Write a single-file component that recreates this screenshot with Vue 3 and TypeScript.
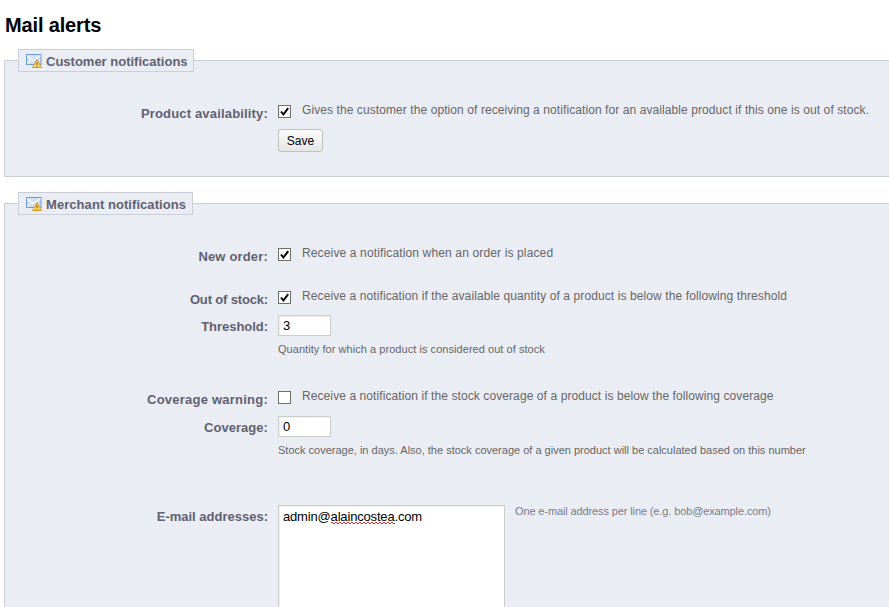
<script setup lang="ts">
interface Row {
  label: string
  checked: boolean
  text: string
  rowClass: string
}
const merchantTop: Row[] = [
  { label: 'New order:', checked: true, text: 'Receive a notification when an order is placed', rowClass: 'r-order' },
]
</script>

<template>
  <div class="page">
    <h2 class="title">Mail alerts</h2>

    <fieldset class="box first">
      <legend class="legend">
        <svg class="ico" width="16" height="16" viewBox="0 0 16 16">
          <rect x="0.5" y="1.5" width="14.5" height="10" fill="#cfe0f6" stroke="#6c9bd6" />
          <path d="M1 2.5 L7.5 7.5 L14.5 2.5" fill="none" stroke="#fff" stroke-width="1.4" />
          <path d="M1 11 L5.5 7" fill="none" stroke="#fff" />
          <path d="M11 6.5 L15.5 14.5 L6.5 14.5 Z" fill="#fcd75f" stroke="#d79a32" stroke-linejoin="round" />
          <path d="M11 9 V12 M11 12.8 V13.8" stroke="#7a5210" stroke-width="1" />
        </svg>
        <span>Customer notifications</span>
      </legend>
      <div class="row r-avail">
        <label class="lab">Product availability:</label>
        <div class="val">
          <div class="check-line">
            <span class="cb"><svg width="11" height="11" viewBox="0 0 11 11"><path d="M2 5.5 L4.4 8.5 L9.2 2.2" fill="none" stroke="#000" stroke-width="2" /></svg></span>
            <span class="desc">Gives the customer the option of receiving a notification for an available product if this one is out of stock.</span>
          </div>
          <button class="btn" type="button">Save</button>
        </div>
      </div>
    </fieldset>

    <fieldset class="box second">
      <legend class="legend narrow">
        <svg class="ico" width="16" height="16" viewBox="0 0 16 16">
          <rect x="0.5" y="1.5" width="14.5" height="10" fill="#cfe0f6" stroke="#6c9bd6" />
          <path d="M1 2.5 L7.5 7.5 L14.5 2.5" fill="none" stroke="#fff" stroke-width="1.4" />
          <path d="M1 11 L5.5 7" fill="none" stroke="#fff" />
          <path d="M11 6.5 L15.5 14.5 L6.5 14.5 Z" fill="#fcd75f" stroke="#d79a32" stroke-linejoin="round" />
          <path d="M11 9 V12 M11 12.8 V13.8" stroke="#7a5210" stroke-width="1" />
        </svg>
        <span>Merchant notifications</span>
      </legend>

      <div v-for="r in merchantTop" :key="r.label" class="row" :class="r.rowClass">
        <label class="lab">{{ r.label }}</label>
        <div class="val">
          <div class="check-line">
            <span class="cb"><svg v-if="r.checked" width="11" height="11" viewBox="0 0 11 11"><path d="M2 5.5 L4.4 8.5 L9.2 2.2" fill="none" stroke="#000" stroke-width="2" /></svg></span>
            <span class="desc">{{ r.text }}</span>
          </div>
        </div>
      </div>

      <div class="row r-stock">
        <label class="lab">Out of stock:</label>
        <div class="val">
          <div class="check-line">
            <span class="cb"><svg width="11" height="11" viewBox="0 0 11 11"><path d="M2 5.5 L4.4 8.5 L9.2 2.2" fill="none" stroke="#000" stroke-width="2" /></svg></span>
            <span class="desc">Receive a notification if the available quantity of a product is below the following threshold</span>
          </div>
        </div>
      </div>
      <div class="row r-thr">
        <label class="lab">Threshold:</label>
        <div class="val">
          <input class="inp" type="text" value="3" />
          <p class="hint">Quantity for which a product is considered out of stock</p>
        </div>
      </div>

      <div class="row r-cov">
        <label class="lab">Coverage warning:</label>
        <div class="val">
          <div class="check-line">
            <span class="cb"></span>
            <span class="desc">Receive a notification if the stock coverage of a product is below the following coverage</span>
          </div>
        </div>
      </div>
      <div class="row r-cvg">
        <label class="lab">Coverage:</label>
        <div class="val">
          <input class="inp" type="text" value="0" />
          <p class="hint">Stock coverage, in days. Also, the stock coverage of a given product will be calculated based on this number</p>
        </div>
      </div>

      <div class="row r-mail">
        <label class="lab">E-mail addresses:</label>
        <div class="val mail-val">
          <div class="area">admin@<span class="spell">alaincostea</span>.com</div>
          <p class="hint side">One e-mail address per line (e.g. bob@example.com)</p>
        </div>
      </div>
    </fieldset>
  </div>
</template>

<style scoped>
.page {
  width: 889px;
  height: 607px;
  overflow: hidden;
  background: #fff;
  font-family: "Liberation Sans", Arial, sans-serif;
  box-sizing: border-box;
  padding-left: 4px;
}
.title {
  margin: 0;
  padding: 15px 0 0 1px;
  height: 34px;
  box-sizing: border-box;
  font-size: 20px;
  line-height: 21px;
  font-weight: 700;
  letter-spacing: -0.15px;
  color: #000;
}
.box {
  margin: 0;
  padding: 0;
  min-width: 0;
  border: 1px solid #ccced7;
  background: #ebedf4;
  width: 900px;
  box-sizing: border-box;
}
.first {
  margin-top: 15px;
  height: 128px;
}
.second {
  margin-top: 15px;
  height: 500px;
}
.legend {
  margin-left: 13px;
  padding: 1px 0 0 7px;
  width: 176px;
  height: 23px;
  box-sizing: border-box;
  border: 1px solid #ccced7;
  background: #ebedf4;
  display: flex;
  align-items: center;
  font-size: 13px;
  font-weight: 700;
  letter-spacing: 0;
  color: #5f6170;
  white-space: nowrap;
}
.legend.narrow {
  width: 175px;
  letter-spacing: 0.06px;
}
.ico {
  flex: none;
  margin-right: 4px;
}
.row {
  display: flex;
}
.lab {
  width: 263px;
  flex: none;
  padding-top: 4px;
  margin-bottom: -1px;
  text-align: right;
  font-size: 13px;
  font-weight: 700;
  letter-spacing: 0.17px;
  line-height: 16px;
  color: #5f6170;
}
.val {
  margin-left: 10px;
  flex: 1;
  min-width: 0;
}
.check-line {
  display: flex;
  align-items: center;
  height: 16px;
}
.cb {
  flex: none;
  width: 13px;
  height: 13px;
  box-sizing: border-box;
  border: 1px solid #6f6f6f;
  background: #fff;
  display: flex;
  align-items: center;
  justify-content: center;
  margin-top: 3px;
}
.cb svg {
  display: block;
  flex: none;
}
.desc {
  margin-left: 11px;
  font-size: 12px;
  line-height: 16px;
  letter-spacing: 0.1px;
  color: #666;
  white-space: nowrap;
}
.btn {
  display: block;
  margin: 11px 0 0;
  padding: 0;
  width: 45px;
  height: 23px;
  border: 1px solid #c0c0c0;
  border-radius: 3px;
  background: linear-gradient(#fbfbfb, #e6e6e6);
  font-family: "Liberation Sans", Arial, sans-serif;
  font-size: 12px;
  color: #000;
}
.r-avail { margin-top: 30px; }
.r-avail .desc { letter-spacing: 0.085px; }
.r-order { margin-top: 30px; }
.r-order .desc { letter-spacing: 0.14px; }
.r-stock { margin-top: 24px; }
.r-stock .lab { letter-spacing: -0.16px; }
.r-thr { margin-top: 8px; }
.r-thr .lab { letter-spacing: -0.03px; }
.r-thr .hint { letter-spacing: 0.05px; }
.r-cov { margin-top: 32px; }
.r-cov .lab { letter-spacing: 0.23px; }
.r-cov .desc { letter-spacing: 0.09px; }
.r-cvg { margin-top: 9px; }
.r-cvg .lab { letter-spacing: 0.05px; }
.r-mail { margin-top: 48px; }
.r-mail .lab { letter-spacing: 0; }
.inp {
  display: block;
  width: 53px;
  height: 21px;
  box-sizing: border-box;
  border: 1px solid #ccc;
  background: #fff;
  box-shadow: inset 1px 1px 0 #f1f1f1;
  padding: 0 0 0 4px;
  margin: 0;
  font-family: "Liberation Sans", Arial, sans-serif;
  font-size: 13px;
  color: #000;
  outline: none;
}
.hint {
  margin: 7px 0 0;
  font-size: 11px;
  line-height: 13px;
  letter-spacing: 0;
  color: #666;
  white-space: nowrap;
}
.mail-val {
  display: flex;
  align-items: flex-start;
}
.area {
  width: 227px;
  height: 200px;
  flex: none;
  box-sizing: border-box;
  border: 1px solid #ccc;
  background: #fff;
  box-shadow: inset 1px 1px 0 #f1f1f1;
  padding: 3px 4px;
  font-size: 13px;
  line-height: 15px;
  letter-spacing: -0.17px;
  color: #000;
}
.spell {
  background-image:
    linear-gradient(45deg, transparent 35%, #e8262a 35%, #e8262a 65%, transparent 65%),
    linear-gradient(-45deg, transparent 35%, #e8262a 35%, #e8262a 65%, transparent 65%);
  background-size: 4px 2px;
  background-position: 0 100%, 2px 100%;
  background-repeat: repeat-x;
}
.hint.side {
  margin: 0 0 0 10px;
  letter-spacing: -0.12px;
  color: #7a7c88;
}
</style>

<style>
html, body { margin: 0; overflow: hidden; }
</style>
